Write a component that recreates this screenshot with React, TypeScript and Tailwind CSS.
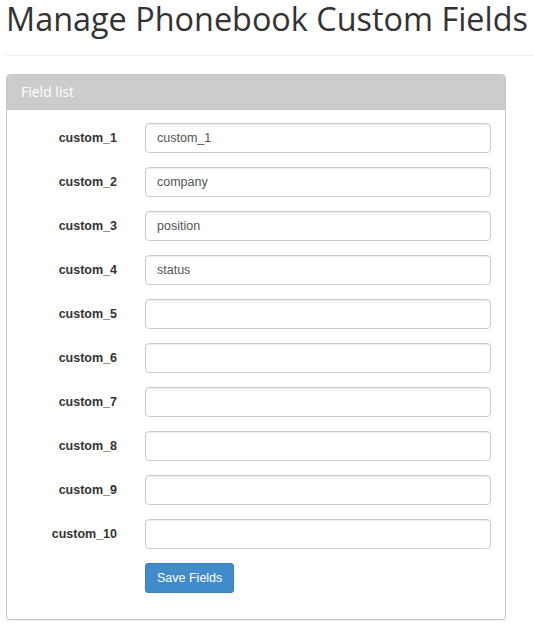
const fields = [
  { name: "custom_1", value: "custom_1" },
  { name: "custom_2", value: "company" },
  { name: "custom_3", value: "position" },
  { name: "custom_4", value: "status" },
  { name: "custom_5", value: "" },
  { name: "custom_6", value: "" },
  { name: "custom_7", value: "" },
  { name: "custom_8", value: "" },
  { name: "custom_9", value: "" },
  { name: "custom_10", value: "" },
];

export default function App() {
  return (
    <div className="min-h-screen bg-white pl-[6px] font-['Liberation_Sans',Arial,sans-serif] text-[13px] text-[#333]">
      <h1 className="mt-[1px] whitespace-nowrap font-['Open_Sans',sans-serif] text-[32.4px] leading-[35px] font-normal text-[#333]">
        Manage Phonebook Custom Fields
      </h1>
      <hr className="mt-[19px] mb-[18px] border-t border-[#eee]" />

      <div className="w-[500px] rounded-[4px] border border-[#c4c4c4] shadow-[0_1px_1px_rgba(0,0,0,0.05)]">
        <div className="h-[35px] rounded-t-[3px] border-b border-[#c4c4c4] bg-[#cccccc] px-[14px] font-['Open_Sans',sans-serif] text-[14px] leading-[34px] text-white">
          Field list
        </div>
        <div className="pt-[13px] pb-[26px] pr-[14px]">
          <div className="flex flex-col gap-[14px]">
            {fields.map((f) => (
              <div key={f.name} className="flex items-center gap-[28px]">
                <label className="w-[110px] text-right text-[12.5px] font-bold text-[#333]">{f.name}</label>
                <input
                  type="text"
                  defaultValue={f.value}
                  className="h-[30px] w-[346px] rounded-[4px] border border-[#ccc] px-[11px] text-[12.5px] text-[#555] shadow-[inset_0_1px_1px_rgba(0,0,0,0.075)] outline-none"
                />
              </div>
            ))}
            <div className="pl-[138px]">
              <button
                type="button"
                className="h-[30px] rounded-[3px] border border-[#357ebd] bg-[#428bca] px-[11px] text-[12.5px] text-white"
              >
                Save Fields
              </button>
            </div>
          </div>
        </div>
      </div>
    </div>
  );
}
